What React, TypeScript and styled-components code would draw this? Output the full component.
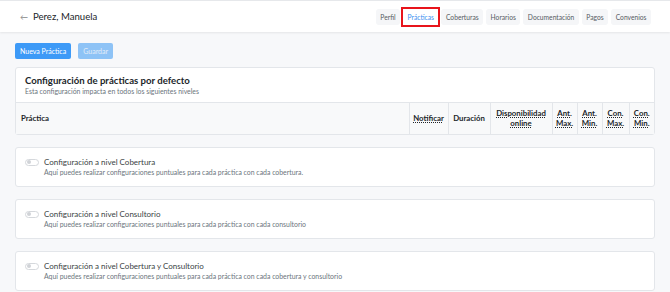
import React from "react";
import styled, { createGlobalStyle } from "styled-components";

const GlobalStyle = createGlobalStyle`
  body {
    margin: 0;
    background: #f7f8fa;
    font-family: Lato, "Open Sans", sans-serif;
    color: #212529;
  }
`;

// Encabezado con nombre y pestañas
const Header = styled.header`
  height: 31px;
  background: #ffffff;
  border-top: 1px solid #e6e8eb;
  box-shadow: 0 1px 2px rgba(0, 0, 0, 0.08);
  display: flex;
  align-items: center;
  justify-content: space-between;
  padding: 0 19px 0 20px;
`;

const Back = styled.div`
  display: flex;
  align-items: center;
  gap: 5px;
  font-size: 9.6px;
`;

const Arrow = styled.span`
  font-size: 8px;
  color: #888;
`;

const Tabs = styled.nav`
  display: flex;
  gap: 3px;
`;

const Tab = styled.span<{ $active?: boolean }>`
  height: 16px;
  line-height: 16px;
  padding: 0 4.5px;
  border-radius: ${(p) => (p.$active ? "0" : "3px")};
  font-size: 6.7px;
  background: ${(p) => (p.$active ? "#ffffff" : "#f5f6f8")};
  color: ${(p) => (p.$active ? "#3c8ff0" : "#555b62")};
  outline: ${(p) => (p.$active ? "2px solid #e8141b" : "none")};
`;

const Main = styled.main`
  padding: 11px 15px 0;
`;

const Actions = styled.div`
  display: flex;
  gap: 7px;
  margin-bottom: 8px;
`;

const Button = styled.button<{ $disabled?: boolean }>`
  height: 16px;
  padding: 0 5px;
  border: none;
  border-radius: 2px;
  font-family: inherit;
  font-size: 7px;
  background: ${(p) => (p.$disabled ? "#8ec3f6" : "#3d9af7")};
  color: ${(p) => (p.$disabled ? "#e3edf8" : "#ffffff")};
`;

const Card = styled.section`
  background: #ffffff;
  border: 1px solid #e3e6ea;
  border-radius: 3px;
  margin-bottom: 12px;
`;

const CardHead = styled.div`
  padding: 6px 9px 6px;
`;

const Title = styled.div`
  font-size: 9.6px;
  font-weight: 700;
  line-height: 13px;
`;

const Subtitle = styled.div`
  font-size: 6.9px;
  color: #6c757d;
  line-height: 9px;
`;

const Table = styled.table`
  width: 100%;
  border-collapse: collapse;
  background: #f8f9fa;
  border-top: 1px solid #e3e6ea;
`;

const Th = styled.th<{ $width?: number; $left?: boolean }>`
  height: 31px;
  padding: 0 3px;
  font-size: 7.8px;
  font-weight: 700;
  line-height: 10px;
  text-align: ${(p) => (p.$left ? "left" : "center")};
  padding-left: ${(p) => (p.$left ? "5px" : "3px")};
  width: ${(p) => (p.$width ? `${p.$width}px` : "auto")};
  border-left: ${(p) => (p.$left ? "none" : "1px solid #e3e6ea")};
  box-sizing: border-box;
`;

const Abbr = styled.abbr`
  text-decoration: underline dotted;
  text-underline-offset: 1px;
`;

const LevelCard = styled(Card)`
  height: 38px;
  display: flex;
  align-items: center;
  padding: 0 9px;
  gap: 5px;
`;

const Toggle = styled.span`
  width: 14px;
  height: 7px;
  border: 1px solid #d5d8dc;
  border-radius: 5px;
  box-sizing: border-box;
  display: flex;
  align-items: center;
  padding-left: 1px;
  margin-top: -9px;
  &::after {
    content: "";
    width: 4px;
    height: 4px;
    border-radius: 50%;
    background: #d0d3d7;
  }
`;

const LevelTitle = styled.div`
  font-size: 8px;
  line-height: 11px;
  color: #3a3f44;
`;

const columns: { label: string[]; width: number; abbr: boolean }[] = [
  { label: ["Notificar"], width: 39, abbr: true },
  { label: ["Duración"], width: 42, abbr: false },
  { label: ["Disponibilidad", "online"], width: 62, abbr: true },
  { label: ["Ant.", "Max."], width: 25, abbr: true },
  { label: ["Ant.", "Min."], width: 25, abbr: true },
  { label: ["Con.", "Max."], width: 27, abbr: true },
  { label: ["Con.", "Min."], width: 25, abbr: true },
];

const levels = [
  {
    title: "Configuración a nivel Cobertura",
    text: "Aquí puedes realizar configuraciones puntuales para cada práctica con cada cobertura.",
  },
  {
    title: "Configuración a nivel Consultorio",
    text: "Aquí puedes realizar configuraciones puntuales para cada práctica con cada consultorio",
  },
  {
    title: "Configuración a nivel Cobertura y Consultorio",
    text: "Aquí puedes realizar configuraciones puntuales para cada práctica con cada cobertura y consultorio",
  },
];

const tabs = ["Perfil", "Prácticas", "Coberturas", "Horarios", "Documentación", "Pagos", "Convenios"];

const App: React.FC = () => {
  return (
    <>
      <GlobalStyle />
      <Header>
        <Back>
          <Arrow>←</Arrow>
          <span>Perez, Manuela</span>
        </Back>
        <Tabs>
          {tabs.map((t) => (
            <Tab key={t} $active={t === "Prácticas"}>
              {t}
            </Tab>
          ))}
        </Tabs>
      </Header>
      <Main>
        <Actions>
          <Button>Nueva Práctica</Button>
          <Button $disabled>Guardar</Button>
        </Actions>

        <Card>
          <CardHead>
            <Title>Configuración de prácticas por defecto</Title>
            <Subtitle>Esta configuración impacta en todos los siguientes niveles</Subtitle>
          </CardHead>
          <Table>
            <thead>
              <tr>
                <Th $left>Práctica</Th>
                {columns.map((c) => {
                  const content = c.label.map((l, i) => (
                    <React.Fragment key={l}>
                      {i > 0 && <br />}
                      {l}
                    </React.Fragment>
                  ));
                  return (
                    <Th key={c.label.join(" ")} $width={c.width}>
                      {c.abbr ? <Abbr>{content}</Abbr> : content}
                    </Th>
                  );
                })}
              </tr>
            </thead>
          </Table>
        </Card>

        {levels.map((lv) => (
          <LevelCard key={lv.title}>
            <Toggle />
            <div>
              <LevelTitle>{lv.title}</LevelTitle>
              <Subtitle>{lv.text}</Subtitle>
            </div>
          </LevelCard>
        ))}
      </Main>
    </>
  );
};

export default App;
